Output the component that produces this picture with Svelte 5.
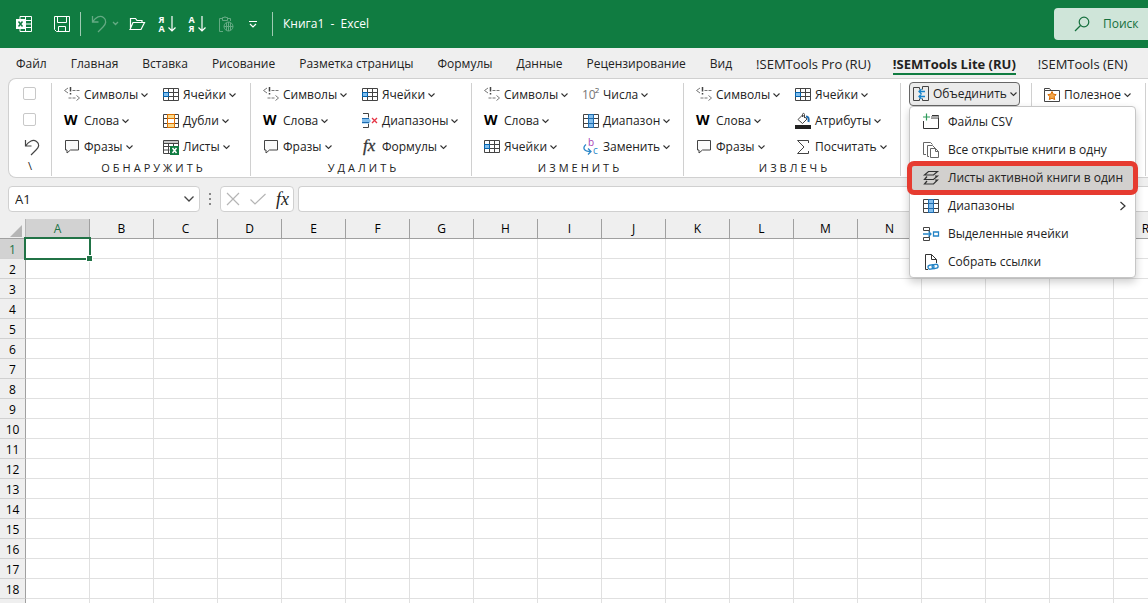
<script>
  const tabs = [
    'Файл', 'Главная', 'Вставка', 'Рисование', 'Разметка страницы', 'Формулы', 'Данные',
    'Рецензирование', 'Вид', '!SEMTools Pro (RU)', '!SEMTools Lite (RU)', '!SEMTools (EN)'
  ];

  // Each group lists its buttons row by row
  const groups = [
    {
      title: 'ОБНАРУЖИТЬ',
      items: [
        ['symbols', 'Символы'], ['cells', 'Ячейки'],
        ['word', 'Слова'], ['doubles', 'Дубли'],
        ['phrase', 'Фразы'], ['sheets', 'Листы']
      ]
    },
    {
      title: 'УДАЛИТЬ',
      items: [
        ['symbols', 'Символы'], ['cells', 'Ячейки'],
        ['word', 'Слова'], ['delete', 'Диапазоны'],
        ['phrase', 'Фразы'], ['fx', 'Формулы']
      ]
    },
    {
      title: 'ИЗМЕНИТЬ',
      items: [
        ['symbols', 'Символы'], ['power', 'Числа'],
        ['word', 'Слова'], ['range', 'Диапазон'],
        ['cells', 'Ячейки'], ['replace', 'Заменить']
      ]
    },
    {
      title: 'ИЗВЛЕЧЬ',
      items: [
        ['symbols', 'Символы'], ['cells', 'Ячейки'],
        ['word', 'Слова'], ['fill', 'Атрибуты'],
        ['phrase', 'Фразы'], ['sum', 'Посчитать']
      ]
    }
  ];

  const menu = [
    ['csv', 'Файлы CSV'],
    ['books', 'Все открытые книги в одну'],
    ['layers', 'Листы активной книги в один'],
    ['range', 'Диапазоны'],
    ['merge', 'Выделенные ячейки'],
    ['links', 'Собрать ссылки']
  ];

  const columns = 'ABCDEFGHIJKLMNOPQR'.split('');
  const rows = Array.from({ length: 18 }, (_, i) => i + 1);

  let activeTab = $state('!SEMTools Lite (RU)');
  let menuOpen = $state(true);
  let menuItem = $state('layers');
  let cellName = $state('A1');
  let formula = $state('');
  let search = $state('');
</script>

{#snippet chevron()}
  <svg class="chevron" width="7" height="6" viewBox="0 0 7 6"><path d="M.5 1.500l3 3 3-3" fill="none" stroke="#333" stroke-width="1.1" /></svg>
{/snippet}

{#snippet icon(name)}
  <svg class="icon" width="16" height="16" viewBox="0 0 16 16" fill="none" stroke="#444">
    {#if name === 'symbols'}
      <path d="M4 1L.5 3.500 4 6M12.500 8.500l3 2.500-3 2.500" stroke="#777" />
      <path d="M6.500 0v4.500M6.500 6v1.500" stroke="#444" stroke-width="1.500" />
      <path d="M8.500 3.500h3M12.500 3.500h3M4.500 11h3M8.500 11h3" stroke="#777" />
    {:else if name === 'word'}
      <text x="0" y="12" font-size="14" font-weight="700" font-family="Open Sans, sans-serif" fill="#000" stroke="none">W</text>
    {:else if name === 'phrase'}
      <path d="M1.500 1.500h13v9.500h-8l-3.500 3v-3H1.500z" fill="#fafafa" />
    {:else if name === 'cells'}
      <path d="M.5 1.500h15v12H.5zM5.500 1.500v12M10.500 1.500v12M.5 5.500h15M.5 9.500h15" />
      <path d="M.5 5.500h5v4h-5z" fill="#83beec" stroke="#0063b1" />
    {:else if name === 'range'}
      <path d="M.5 1.500h15v13H.5zM.5 5.500h15M.5 10.500h15" />
      <path d="M5.500 1.500h5v13h-5z" fill="#83beec" stroke="#1e6cb0" />
      <path d="M5.500 5.500h5M5.500 10.500h5" stroke="#1e6cb0" />
    {:else if name === 'doubles'}
      <path d="M.5 1.500h15v13H.5zM.5 5.500h15M.5 10.500h15" />
      <path d="M4.500 1.500h7v4h-7zM4.500 10.500h7v4h-7z" fill="#f8db8f" stroke="#e07000" />
      <path d="M4.500 5.500h7v5h-7z" fill="#fff" stroke="#e07000" />
    {:else if name === 'sheets'}
      <path d="M7 14.500H.5v-13h15V8M.5 4.500h15M5.500 4.500v10M10.500 4.500v3M.5 7.500h15M.5 11h6" />
      <path d="M1 2h14v2H1z" fill="#c8c8c8" stroke="none" />
      <path d="M7 7h9v9H7z" fill="#107c41" stroke="none" />
      <path d="M9.500 9l4 5M13.500 9l-4 5" stroke="#fff" stroke-width="1.500" />
    {:else if name === 'delete'}
      <path d="M1 .5h5.500v4M1 14.500h5.500v-4" />
      <path d="M0 5.500h7l2 2.500-2 2.500H0z" fill="#83beec" stroke="none" />
      <path d="M0 5.500h7M0 9.500h7" stroke="#1e6cb0" />
      <path d="M10 5l5 5M15 5l-5 5" stroke="#e53545" stroke-width="1.300" />
    {:else if name === 'fx'}
      <text x="1" y="12" font-size="17" font-style="italic" font-family="Liberation Serif, serif" fill="#333" stroke="#333" stroke-width=".3">fx</text>
    {:else if name === 'power'}
      <text x="-1" y="12" font-size="12" font-family="Open Sans, sans-serif" fill="#777" stroke="none">10<tspan dx="-1" dy="-6" font-size="8" fill="#555">2</tspan></text>
    {:else if name === 'replace'}
      <text x="5" y="7" font-size="10" font-family="Open Sans, sans-serif" fill="#a843b5" stroke="none">b</text>
      <text x="10" y="15" font-size="10" font-family="Open Sans, sans-serif" fill="#2b87c8" stroke="none">c</text>
      <path d="M3 5.500C-1 9 1 12.500 7.500 12.500M5 9.500l3 3-3 3" stroke="#2b87c8" stroke-width="1.300" />
    {:else if name === 'fill'}
      <path d="M7.500 4V1.500c0-1.500 2-1.500 2 0V5M7.500 2L3 6.500 7.500 10.500 12 6z" />
      <path d="M11 3.500c2.500 0 3 2 2.500 5.500" stroke="#1e6cb0" stroke-width="2" />
      <path d="M0 12h16v4H0z" fill="#222" stroke="none" />
    {:else if name === 'sum'}
      <path d="M13.500 4V1.500h-11L9 8l-6.500 6.500h11V12" />
    {:else if name === 'combine'}
      <path d="M6.500 1.500h-6v13h6M9.500.5h6v14h-6M6.500 1.500v2M6.500 12.500v2M9.500.5v3M9.500 12.500v2" />
      <path d="M6 5.500h6M8.500 3L6 5.500 8.500 8M6 10.500h6M8.500 8L6 10.500 8.500 13" stroke="#1583cc" stroke-width="1.300" />
    {:else if name === 'useful'}
      <path d="M.5 3.500v-2h5l1.500 2h8.500v11H.5v-11h6.500" />
      <path d="M8 4.500l1.300 2.700 2.900.4-2.100 2 .6 3L8 11.200l-2.700 1.400.6-3-2.100-2 2.900-.4z" fill="#f3a64a" stroke="#d96c00" />
    {:else if name === 'csv'}
      <path d="M.5 7v7.500h15v-13H9M8 4h8" stroke="#333" />
      <path d="M8 2h7.500v2H8z" fill="#aaa" stroke="none" />
      <path d="M3.500-.5v7M0 3h7" stroke="#2e9b5b" stroke-width="1.200" />
    {:else if name === 'books'}
      <path d="M3 12.500H.5V.5h7l2 2M6 14.500H4.500v-11h5l3 3M7.500 6.500h5l3 3v6h-8zM12.500 6.500v3h3" stroke="#666" />
    {:else if name === 'layers'}
      <path d="M5.500 1.500h9L10.500 5h-9zM4 6.500l-2.500 3h9l4-3.500H12M4 11l-2.500 3h9l4-4H12" stroke="#333" stroke-width="1.200" />
    {:else if name === 'merge'}
      <path d="M.5 4.500v-3h6v3zM6.500 4.500V6M.5 11.500v3h6v-3zM6.500 11.500V10" />
      <path d="M0 8h8M5.500 5.500L8 8l-2.500 2.500M10.500 6h5v4h-5z" stroke="#2584c6" stroke-width="1.300" />
    {:else if name === 'links'}
      <path d="M5 15.500H2.500V.5h6l5 5V9M8.500.5v5h5" stroke="#333" />
      <rect x="5" y="11" width="6" height="4" rx="2" transform="rotate(-12 8 13)" stroke="#2584c6" stroke-width="1.300" />
      <rect x="9" y="10.500" width="6" height="4" rx="2" transform="rotate(-12 12 12)" stroke="#2584c6" stroke-width="1.300" />
    {/if}
  </svg>
{/snippet}

<div class="window">
  <header class="titlebar">
    <svg class="logo" width="16" height="16" viewBox="0 0 16 16" fill="none" stroke="#fff">
      <path d="M4 3V.5h11.500v15H4V13M9.500.5v15M9 4.500h6M9 8h6M9 11.500h6" />
      <path d="M0 3h9v10H0z" fill="#fff" stroke="none" />
      <path d="M2.500 5.500l4 5M6.500 5.500l-4 5" stroke="#107c41" stroke-width="1.500" />
    </svg>
    <button class="quick save" aria-label="Сохранить">
      <svg width="16" height="16" viewBox="0 0 16 16" fill="none" stroke="#fff"><path d="M.5.5h15v15H2.500l-2-2zM3.500.5v6h9v-6M4.500 15.500v-5h7v5" /></svg>
    </button>
    <span class="bar"></span>
    <button class="quick faded undo-top" aria-label="Отменить">
      <svg width="28" height="18" viewBox="0 0 28 18" fill="none" stroke="#fff" stroke-width="1.300"><path d="M1.500 1v6h6M1.500 7C5 2 9 0 12.500 2.500S15 9 12 12l-5 5M22 7l2.500 2.500L27 7" /></svg>
    </button>
    <button class="quick" aria-label="Открыть">
      <svg width="16" height="16" viewBox="0 0 16 16" fill="none" stroke="#fff" stroke-width="1.200"><path d="M1.500 13V2.500h5l1.500 2h5v2M1 13.500L4 6.500h11.500L12 13.500z" /></svg>
    </button>
    {#each [['Я', 'А'], ['А', 'Я']] as pair}
      <button class="quick sort" aria-label={`Сортировка ${pair[0]}–${pair[1]}`}>
        <span class="letters"><b>{pair[0]}</b><b>{pair[1]}</b></span>
        <svg width="8" height="16" viewBox="0 0 8 16" fill="none" stroke="#fff" stroke-width="1.200"><path d="M4 0v15M.5 11.500L4 15l3.500-3.500" /></svg>
      </button>
    {/each}
    <button class="quick faded" aria-label="Вставить">
      <svg width="16" height="16" viewBox="0 0 16 16" fill="none" stroke="#fff"><path d="M5 15.500H1.500v-13h3M9.500 2.500h3V5M4.500 4.500v-3h2l.5-1 .5 1h2v3z" /><circle cx="10.500" cy="10.500" r="4.500" /><path d="M6 10.500h9M10.500 6v9M8.500 7v7M12.500 7v7" /></svg>
    </button>
    <button class="quick customize" aria-label="Настройка панели">
      <svg width="8" height="8" viewBox="0 0 8 8" fill="none" stroke="#fff" stroke-width="1.200"><path d="M0 1.500h8M1 4l3 3 3-3" /></svg>
    </button>
    <span class="bar"></span>
    <span class="doc">Книга1&nbsp; -&nbsp; Excel</span>
    <label class="search">
      <svg width="16" height="16" viewBox="0 0 16 16" fill="none" stroke="#156f3d" stroke-width="1.200"><circle cx="10" cy="6" r="4.800" /><path d="M6.500 9.500L1 15" /></svg>
      <input type="text" placeholder="Поиск" aria-label="Поиск" bind:value={search} />
    </label>
  </header>

  <nav class="tabs">
    {#each tabs as tab}
      <button
        class="tab"
        class:addin={tab.startsWith('!')}
        class:active={tab === activeTab}
        onclick={() => (activeTab = tab)}
      >{tab}</button>
    {/each}
  </nav>

  <section class="ribbon">
    <div class="group toggles">
      <input type="checkbox" aria-label="Параметр 1" />
      <input type="checkbox" aria-label="Параметр 2" />
      <button class="undo" aria-label="Отменить">
        <svg width="16" height="16" viewBox="0 0 16 16" fill="none" stroke="#444" stroke-width="1.200"><path d="M1.500 1v6h6M1.500 7C5 2 9 0 12.500 2.500S15 8 12 11l-5 5" /></svg>
      </button>
      <span class="caption slash">\</span>
    </div>
    {#each groups as group}
      <div class="group">
        <div class="commands">
          {#each group.items as [name, label]}
            <button class="command">{@render icon(name)}<span>{label}</span>{@render chevron()}</button>
          {/each}
        </div>
        <span class="caption">{group.title}</span>
      </div>
    {/each}
    <div class="group combine">
      <button class="command pressed" aria-expanded={menuOpen} onclick={() => (menuOpen = !menuOpen)}>
        {@render icon('combine')}<span>Объединить</span>{@render chevron()}
      </button>
      {#if menuOpen}
        <div class="menu">
          {#each menu as [name, label]}
            <button class="item" class:selected={name === menuItem} onclick={() => (menuItem = name)}>
              {@render icon(name)}<span>{label}</span>
              {#if label === 'Диапазоны'}
                <svg class="more" width="8" height="10" viewBox="0 0 8 10" fill="none" stroke="#333" stroke-width="1.200"><path d="M1.500 1l4.500 4-4.500 4" /></svg>
              {/if}
            </button>
          {/each}
        </div>
      {/if}
    </div>
    <div class="group">
      <button class="command">{@render icon('useful')}<span>Полезное</span>{@render chevron()}</button>
    </div>
  </section>

  <div class="formula-bar">
    <div class="box name-box">
      <input aria-label="Имя ячейки" bind:value={cellName} />
      <svg width="12" height="8" viewBox="0 0 12 8" fill="none" stroke="#444" stroke-width="1.300"><path d="M1.500 1.500L6 6l4.500-4.500" /></svg>
    </div>
    <svg class="grip" width="4" height="12" viewBox="0 0 4 12" fill="#888"><path d="M1 0h2v2H1zM1 5h2v2H1zM1 10h2v2H1z" /></svg>
    <div class="box entry">
      <button aria-label="Отмена"><svg width="14" height="14" viewBox="0 0 14 14" fill="none" stroke="#b5b5b5" stroke-width="1.200"><path d="M1 1l12 12M13 1L1 13" /></svg></button>
      <button aria-label="Ввод"><svg width="16" height="14" viewBox="0 0 16 14" fill="none" stroke="#b5b5b5" stroke-width="1.200"><path d="M.5 7.500L5 12 15.500 2" /></svg></button>
      <button class="fx">fx</button>
    </div>
    <input class="box formula" aria-label="Строка формул" bind:value={formula} />
  </div>

  <table class="sheet">
    <thead>
      <tr>
        <th class="corner"><svg width="12" height="12" viewBox="0 0 12 12" fill="#b5b5b5"><path d="M12 0v12H0z" /></svg></th>
        {#each columns as col}
          <th class:current={col === 'A'}>{col}</th>
        {/each}
      </tr>
    </thead>
    <tbody>
      {#each rows as row}
        <tr>
          <th class:current={row === 1}>{row}</th>
          {#each columns as col}
            <td class:cursor={row === 1 && col === 'A'}></td>
          {/each}
        </tr>
      {/each}
      <tr>
        <th></th>
        {#each columns as col}
          <td></td>
        {/each}
      </tr>
    </tbody>
  </table>
</div>

<style>
  :global(body) {
    overflow: hidden;
  }

  .window {
    height: 100vh;
    overflow: hidden;
    background: #efefef;
    color: #222;
    font-family: 'Open Sans', 'Noto Sans', sans-serif;
    font-size: 12px;
    line-height: 16px;
  }

  button,
  input {
    font: inherit;
    color: inherit;
    background: none;
    border: none;
    padding: 0;
    margin: 0;
  }

  button,
  label {
    display: flex;
    align-items: center;
    white-space: nowrap;
  }

  svg {
    flex: none;
    overflow: visible;
  }

  .titlebar {
    display: flex;
    align-items: center;
    height: 48px;
    padding-left: 16px;
    gap: 13px;
    background: #107c41;
    color: #fff;
  }

  .save {
    margin-left: 9px;
  }

  .titlebar .bar {
    width: 1px;
    height: 24px;
    margin: 0 -3px;
    background: #9fcbb3;
  }

  .undo-top {
    margin-right: -3px;
  }

  .faded {
    opacity: 0.35;
  }

  .sort {
    gap: 3px;
    margin-right: -1px;
  }

  .customize {
    margin: 0 5px 0 2px;
  }

  .letters {
    display: flex;
    flex-direction: column;
    width: 7px;
    font-size: 9px;
    line-height: 9px;
  }

  .search {
    width: 94px;
    height: 32px;
    margin-left: auto;
    padding-left: 20px;
    gap: 13px;
    border-radius: 4px 0 0 4px;
    background: #cfe5d9;
    box-sizing: border-box;
  }

  .search input {
    width: 45px;
    outline: none;
  }

  .search input::placeholder {
    color: #156f3d;
    opacity: 1;
  }

  .tabs {
    display: flex;
    gap: 24px;
    height: 30px;
    padding-left: 16px;
  }

  .tab {
    height: 27px;
    padding-top: 6px;
    border-bottom: 2px solid transparent;
    box-sizing: border-box;
  }

  .tab.addin {
    margin-right: -2px;
    font-size: 13px;
  }

  .tab.active {
    font-weight: 700;
    border-color: #107c41;
  }

  .ribbon {
    display: grid;
    grid-template-columns: 43px 199px 221px 212px 217px 131px 114px auto;
    height: 100px;
    margin-left: 8px;
    border: 1px solid #d0d0d0;
    border-right: none;
    border-radius: 8px 0 0 8px;
    background: #fff;
    box-sizing: border-box;
  }

  .group {
    position: relative;
    display: flex;
    flex-direction: column;
    margin: 4px 0 5px;
    padding-left: 12px;
    border-right: 1px solid #d0d0d0;
  }

  .commands {
    display: grid;
    grid-template-columns: 99px auto;
  }

  .command {
    height: 26px;
    gap: 4px;
    margin-top: -1px;
    margin-bottom: 1px;
  }

  .command .chevron {
    margin-left: -1px;
  }

  .caption {
    margin: -1px 7px 0 0;
    text-align: center;
    font-size: 11px;
    letter-spacing: 3px;
  }

  .toggles {
    align-items: center;
    padding: 0;
  }

  .toggles input {
    appearance: none;
    width: 13px;
    height: 13px;
    margin: 4px 2px 9px 0;
    border: 1px solid #c8c8c8;
    border-radius: 2px;
  }

  .toggles .undo {
    height: 23px;
    margin-left: 4px;
  }

  .caption.slash {
    margin: 0;
    letter-spacing: 0;
  }

  .combine {
    padding: 0 11px 0 8px;
  }

  .pressed {
    height: 24px;
    margin: -1px 0 0;
    padding-left: 3px;
    border: 1px solid #666;
    border-radius: 4px;
    background: #ebebeb;
    box-sizing: border-box;
  }

  .menu {
    position: absolute;
    top: 23px;
    left: 8px;
    z-index: 2;
    width: 227px;
    padding: 1px 0;
    border: 1px solid #c6c6c6;
    border-radius: 4px;
    background: #fff;
    box-shadow: 0 4px 8px rgba(0, 0, 0, 0.2);
    box-sizing: border-box;
  }

  .item {
    width: 100%;
    height: 28px;
    padding: 0 8px 0 13px;
    gap: 9px;
  }

  .item.selected {
    background: #d2d0ce;
    outline: 5px solid #e63b30;
    outline-offset: -2px;
    border-radius: 4px;
  }

  .more {
    margin-left: auto;
  }

  .formula-bar {
    display: flex;
    align-items: center;
    height: 41px;
    padding: 0 0 0 8px;
  }

  .box {
    display: flex;
    align-items: center;
    height: 26px;
    border: 1px solid #d0d0d0;
    border-radius: 4px;
    background: #fff;
    box-sizing: border-box;
  }

  .name-box {
    width: 192px;
    padding: 0 4px 0 6px;
    font-size: 13px;
  }

  .name-box input {
    flex: 1;
    min-width: 0;
  }

  .grip {
    margin: 0 8px;
  }

  .entry {
    width: 74px;
    padding: 0 4px 0 5px;
    justify-content: space-between;
  }

  .fx {
    font-family: 'Liberation Serif', serif;
    font-size: 18px;
    font-style: italic;
  }

  .formula {
    flex: 1;
    margin-left: 4px;
    border-right: none;
    border-radius: 4px 0 0 4px;
  }

  .sheet {
    width: 1178px;
    table-layout: fixed;
    border-collapse: separate;
    border-spacing: 0;
    background: #fff;
  }

  .sheet th,
  .sheet td {
    height: 20px;
    padding: 0;
    border-right: 1px solid #e0e0e0;
    border-bottom: 1px solid #e0e0e0;
    box-sizing: border-box;
  }

  .sheet th {
    width: 64px;
    font-weight: 400;
    color: #000;
    background: #efefef;
    border-color: #a0a0a0;
  }

  .sheet tbody th {
    padding-top: 2px;
    border-bottom-color: #d0d0d0;
  }

  .sheet .corner {
    width: 26px;
    text-align: right;
    padding-right: 3px;
    border-right-color: #b5b5b5;
  }

  .corner svg {
    display: inline-block;
    vertical-align: bottom;
  }

  .sheet th.current {
    background: #d2d2d2;
    color: #217346;
  }

  .cursor {
    position: relative;
  }

  .cursor::before {
    content: '';
    position: absolute;
    inset: -2px;
    border: 2px solid #217346;
  }

  .cursor::after {
    content: '';
    position: absolute;
    right: -4px;
    bottom: -4px;
    width: 5px;
    height: 5px;
    border: 1px solid #fff;
    background: #217346;
  }
</style>
